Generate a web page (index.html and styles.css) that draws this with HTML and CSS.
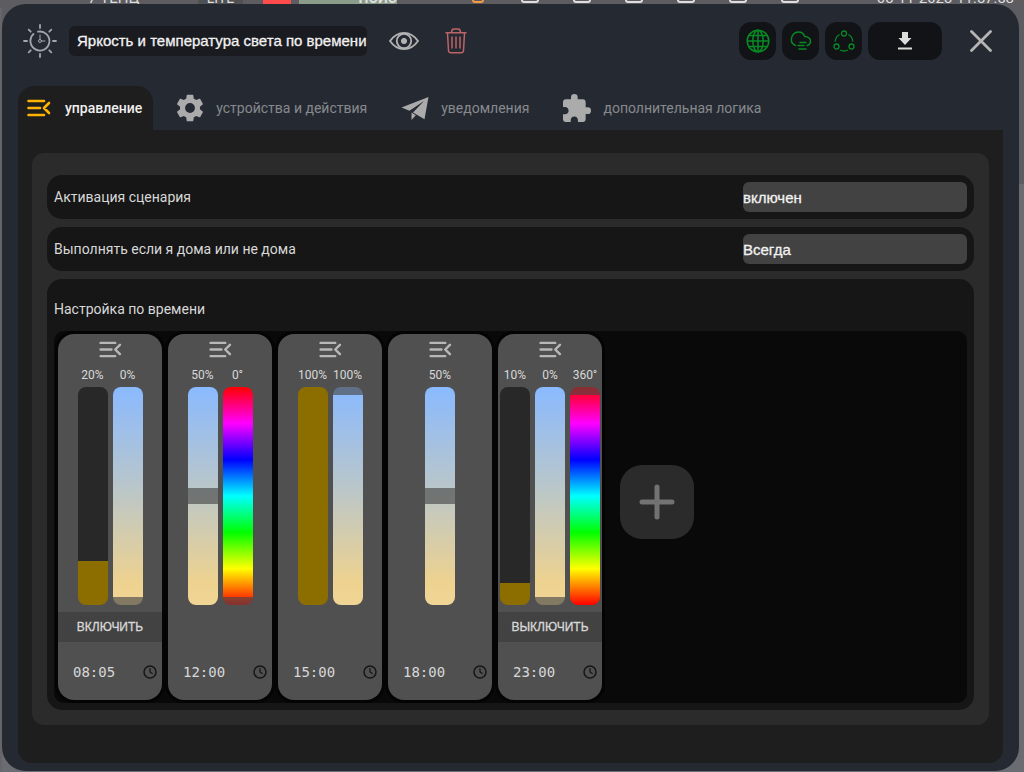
FILE: index.html
```html
<!DOCTYPE html>
<html lang="ru">
<head>
<meta charset="utf-8">
<title>Яркость и температура света по времени</title>
<link rel="stylesheet" href="styles.css">
</head>
<body>
<svg class="sprite" aria-hidden="true">
  <symbol id="menu-open" viewBox="0 0 24 18"><path d="M1.500 2h15.500M1.500 9h11.500M1.500 16h15.500M22 4l-5 5 5 5" fill="none" stroke="currentColor" stroke-width="2.600" stroke-linecap="round" stroke-linejoin="round"/></symbol>
  <symbol id="clock" viewBox="0 0 14 14"><circle cx="7" cy="7" r="6" fill="none" stroke="currentColor" stroke-width="1.500"/><path d="M7 3.300V7l2.600 1.700" fill="none" stroke="currentColor" stroke-width="1.300"/></symbol>
</svg>

<div class="backdrop" aria-hidden="true">
  <div class="topbar">
    <span class="brand">7·ТЕНЦ</span>
    <span class="chip">LITE</span>
    <span class="chip chip-red"></span>
    <span class="chip chip-green">ПОИС</span>
    <span class="mini mini-orange"></span><span class="mini"></span><span class="mini"></span><span class="mini"></span><span class="mini"></span><span class="mini"></span><span class="mini"></span>
    <span class="date">05-11-2023 11:57:58</span>
  </div>
</div>

<main class="dialog" role="dialog" aria-labelledby="title">
  <header class="head">
    <svg class="logo" viewBox="0 0 34 34" fill="none" stroke="#a3a6aa" stroke-linecap="round">
      <path d="M10.500 10A9.500 9.500 0 1 0 15 7.700M8 14.500l-.3 1" stroke-width="1.800"/>
      <path d="M17 1v3M17 30v3M1 17h3M30 17h3M5.700 5.700l2 2M26.300 26.300l2 2M28.300 5.700l-2 2M5.700 28.300l2-2" stroke-width="1.800"/>
      <path d="M17 11v4.500M18.600 17H22" stroke-width="1"/><circle cx="17" cy="17" r="1.500" stroke-width="1"/>
    </svg>
    <input class="title" id="title" type="text" value="Яркость и температура света по времени" aria-label="Название сценария">
    <button class="plain eye" aria-label="Показать">
      <svg width="30" height="20" viewBox="0 0 30 20" fill="none" stroke="#b3b3b3" stroke-width="1.800"><path d="M1 10C5 4.300 9.500 1.800 15 1.800S25 4.300 29 10C25 15.700 20.500 18.200 15 18.200S5 15.700 1 10z"/><circle cx="15" cy="10" r="7.200"/><circle cx="15" cy="10" r="2.600" fill="#b3b3b3" stroke-width="1"/></svg>
    </button>
    <button class="plain trash" aria-label="Удалить">
      <svg width="22" height="26" viewBox="0 0 22 26" fill="none" stroke="#bd6468" stroke-width="1.500"><path d="M.5 4.700h21M2.500 5l1 17.500q.2 2.300 2.500 2.300h10q2.300 0 2.500-2.300L19.500 5M6.500 4.500q0-3.500 2.500-3.500h4q2.500 0 2.500 3.500M7 8.500v12M11 8.500v12M15 8.500v12"/></svg>
    </button>
    <div class="tools">
      <button class="tool" aria-label="Интернет">
        <svg width="24" height="24" viewBox="0 0 24 24" fill="none" stroke="#078a24" stroke-width="1.500"><circle cx="12" cy="12" r="10.800"/><ellipse cx="12" cy="12" rx="5.200" ry="10.800"/><path d="M12 1v22M1 12h22M3 6.500h18M3 17.500h18"/></svg>
      </button>
      <button class="tool" aria-label="Облако">
        <svg width="22" height="20" viewBox="0 0 22 20" fill="none" stroke="#078a24" stroke-width="1.500" stroke-linecap="round"><path d="M5.500 14.500C3 13.500 1.200 11.500 1.400 8.500 1.500 4 4.700 1 8.500 1c3 0 5.300 1.700 6.200 4.500C18.500 5.500 20.700 8 20.500 10.500c-.2 2.300-1.300 3.600-3.500 4M10 11.500h6M8 14.500h6M9 18h7"/></svg>
      </button>
      <button class="tool" aria-label="Связи">
        <svg width="22" height="22" viewBox="0 0 22 22" fill="none" stroke="#078a24" stroke-width="1.300"><circle cx="11" cy="3.500" r="2.500"/><circle cx="3.500" cy="16.500" r="2.500"/><circle cx="18.500" cy="16.500" r="2.500"/><path d="M6.500 4.500Q2.500 7 2.200 11.500M15.500 4.500Q19.500 7 19.800 11.500M7 20q4 2 8 0"/></svg>
      </button>
      <button class="tool tool-wide" aria-label="Скачать">
        <svg width="14" height="18" viewBox="0 0 14 18" fill="#dcdcdc"><path d="M4 0h6v6h3.500L7 13 .5 6H4zM0 15.500h14V17.500H0z"/></svg>
      </button>
      <button class="plain close" aria-label="Закрыть">
        <svg width="22" height="22" viewBox="0 0 22 22" stroke="#b5b5b5" stroke-width="2.800" stroke-linecap="round"><path d="M1.500 1.500l19 19M20.500 1.500l-19 19"/></svg>
      </button>
    </div>
  </header>

  <nav class="tabs">
    <a class="tab active" href="#control"><svg class="tab-icon" viewBox="-2 -5 28 28"><use href="#menu-open" width="24" height="18"/></svg>управление</a>
    <a class="tab" href="#devices"><svg class="tab-icon" viewBox="1.500 1.500 21 21" fill="#ababab"><path d="M19.430 12.980c.04-.32.070-.64.070-.98s-.03-.66-.07-.98l2.110-1.650c.19-.15.240-.42.120-.64l-2-3.460c-.12-.22-.39-.3-.61-.22l-2.490 1c-.52-.4-1.080-.73-1.690-.98l-.38-2.650C14.460 2.180 14.250 2 14 2h-4c-.25 0-.46.180-.49.420l-.38 2.650c-.61.250-1.170.590-1.690.980l-2.490-1c-.23-.09-.49 0-.61.220l-2 3.460c-.13.220-.07.490.12.640l2.110 1.650c-.04.320-.07.650-.07.980s.03.660.07.980l-2.110 1.650c-.19.150-.24.420-.12.640l2 3.460c.12.220.39.300.61.220l2.490-1c.52.400 1.080.730 1.690.980l.38 2.650c.03.240.24.420.49.420h4c.25 0 .46-.18.490-.42l.38-2.650c.61-.25 1.170-.59 1.690-.98l2.490 1c.23.090.49 0 .61-.22l2-3.460c.12-.22.070-.49-.12-.64l-2.110-1.650zM12 15.700a3.700 3.700 0 1 1 0-7.400 3.700 3.700 0 0 1 0 7.400z"/></svg>устройства и действия</a>
    <a class="tab" href="#notices"><svg class="tab-icon" viewBox="0 0 28 28" fill="#ababab"><path d="M27.500 3L.5 13.500l8 3.300L23 7 12 18.500l11.500 6.800zM10.500 18.500v7.500l4.300-4.800z"/></svg>уведомления</a>
    <a class="tab" href="#logic"><svg class="tab-icon" viewBox="2 1 21 21" fill="#ababab"><path d="M20.500 11H19V7c0-1.100-.9-2-2-2h-4V3.500a2.500 2.500 0 0 0-5 0V5H4c-1.100 0-1.990.9-1.990 2v3.800H3.500c1.490 0 2.700 1.210 2.700 2.700s-1.210 2.700-2.700 2.700H2V20c0 1.100.9 2 2 2h3.800v-1.500c0-1.490 1.210-2.700 2.700-2.700 1.490 0 2.700 1.210 2.700 2.700V22H17c1.100 0 2-.9 2-2v-4h1.500a2.500 2.500 0 0 0 0-5z"/></svg>дополнительная логика</a>
  </nav>

  <section class="body" id="control">
    <div class="panel">
      <div class="row">
        <label for="activation">Активация сценария</label>
        <select id="activation"><option>включен</option><option>выключен</option></select>
      </div>
      <div class="row">
        <label for="presence">Выполнять если я дома или не дома</label>
        <select id="presence"><option>Всегда</option><option>Дома</option></select>
      </div>
      <div class="schedule">
        <h2>Настройка по времени</h2>
        <div class="board">
          <article class="card">
            <button class="card-menu" aria-label="Меню"><svg><use href="#menu-open"/></svg></button>
            <div class="bars">
              <label class="bar">20%<input class="level" type="range" value="20" style="--v:20%"></label>
              <label class="bar">0%<input class="warmth" type="range" value="0" style="--v:0%"></label>
            </div>
            <button class="action">ВКЛЮЧИТЬ</button>
            <label class="time"><input type="text" value="08:05" aria-label="Время"><svg><use href="#clock"/></svg></label>
          </article>
          <article class="card">
            <button class="card-menu" aria-label="Меню"><svg><use href="#menu-open"/></svg></button>
            <div class="bars">
              <label class="bar">50%<input class="warmth" type="range" value="50" style="--v:50%"></label>
              <label class="bar">0°<input class="hue" type="range" max="360" value="0" style="--v:0%"></label>
            </div>
            <label class="time"><input type="text" value="12:00" aria-label="Время"><svg><use href="#clock"/></svg></label>
          </article>
          <article class="card">
            <button class="card-menu" aria-label="Меню"><svg><use href="#menu-open"/></svg></button>
            <div class="bars">
              <label class="bar">100%<input class="level" type="range" value="100" style="--v:100%"></label>
              <label class="bar">100%<input class="warmth" type="range" value="100" style="--v:100%"></label>
            </div>
            <label class="time"><input type="text" value="15:00" aria-label="Время"><svg><use href="#clock"/></svg></label>
          </article>
          <article class="card">
            <button class="card-menu" aria-label="Меню"><svg><use href="#menu-open"/></svg></button>
            <div class="bars">
              <label class="bar">50%<input class="warmth" type="range" value="50" style="--v:50%"></label>
            </div>
            <label class="time"><input type="text" value="18:00" aria-label="Время"><svg><use href="#clock"/></svg></label>
          </article>
          <article class="card">
            <button class="card-menu" aria-label="Меню"><svg><use href="#menu-open"/></svg></button>
            <div class="bars">
              <label class="bar">10%<input class="level" type="range" value="10" style="--v:10%"></label>
              <label class="bar">0%<input class="warmth" type="range" value="0" style="--v:0%"></label>
              <label class="bar">360°<input class="hue" type="range" max="360" value="360" style="--v:100%"></label>
            </div>
            <button class="action">ВЫКЛЮЧИТЬ</button>
            <label class="time"><input type="text" value="23:00" aria-label="Время"><svg><use href="#clock"/></svg></label>
          </article>
          <button class="add" aria-label="Добавить"><svg width="36" height="36" viewBox="0 0 36 36" stroke="#727272" stroke-width="5" stroke-linecap="round"><path d="M18 3v30M3 18h30"/></svg></button>
        </div>
      </div>
    </div>
  </section>
</main>
</body>
</html>
```
FILE: styles.css
```css
* { box-sizing: border-box; }
body {
  margin: 0;
  min-height: 100vh;
  background: #5c5c61;
  color: #d8d8d8;
  font: 14px/20px Roboto, sans-serif;
}
button, input, select { margin: 0; padding: 0; border: 0; font: inherit; color: inherit; }
button { display: flex; align-items: center; justify-content: center; background: none; cursor: pointer; }
h2 { margin: 0; font-size: 14px; font-weight: 400; }
.sprite { display: none; }

/* page behind the dialog */
.backdrop {
  position: absolute;
  inset: 0;
  overflow: hidden;
  background: linear-gradient(90deg, #66666a 50%, transparent 50%), linear-gradient(#5c5c61 184px, #6b6b72 184px);
  background-size: 4px 100%, 100% 100%;
  background-repeat: no-repeat;
}
.topbar { display: flex; align-items: flex-start; gap: 14px; height: 20px; margin-top: -12px; padding: 0 10px 0 88px; background: #5c5c61; color: #dedede; font-size: 15px; white-space: nowrap; }
.chip { width: 45px; height: 20px; margin-left: 6px; background: #515154; text-align: center; font-size: 14px; }
.brand { width: 90px; }
.chip-red { width: 28px; background: #ff4b4b; }
.chip-green { width: 98px; margin: 0 61px 0 -6px; background: #8b9c8b; text-align: right; font-weight: 700; }
.mini { width: 18px; height: 15px; margin-right: 20px; border: 2px solid #dedede; border-radius: 3px; }
.mini-orange { width: 12px; margin-right: 23px; border-color: #f39a3e; }
.date { margin-left: auto; }

.dialog {
  position: relative;
  display: flex;
  flex-direction: column;
  min-height: calc(100vh - 5px);
  margin: 4px 5px 1px 2px;
  padding: 0 16px 8px;
  border-radius: 24px;
  background: #252932;
}
.head { display: flex; align-items: center; height: 73px; padding-left: 5px; }
.logo { width: 34px; height: 34px; flex: none; margin-right: 12px; }
.title {
  width: 298px;
  height: 30px;
  padding: 0 0 0 8px;
  border-radius: 6px;
  background: #1a1b20;
  color: #f2f2f2;
  font: 15px "Liberation Sans", sans-serif;
  -webkit-text-stroke: 0.3px;
}
.eye { margin-left: 22px; }
.trash { margin-left: 26px; }
.tools { display: flex; align-items: center; gap: 6px; margin-left: auto; }
.tool { width: 37px; height: 38px; border-radius: 12px; background: #121317; }
.tool-wide { width: 74px; }
.close { margin: 0 11px 0 22px; }

.tabs { display: flex; gap: 16px; margin-top: 9px; }
.tab {
  display: flex;
  align-items: center;
  gap: 12px;
  height: 44px;
  padding: 0 11px 0 7px;
  border-radius: 16px 16px 0 0;
  color: #87898d;
  text-decoration: none;
}
.tab.active { background: #1e1e1e; color: #f0f0f0; font-weight: 500; }
.tab.active .tab-icon { color: #ffb300; }
.tab-icon { width: 28px; height: 28px; }

.body { flex: 1; padding: 23px 14px 38px; border-radius: 0 0 14px 14px; background: #1e1e1e; }
.panel { display: flex; flex-direction: column; gap: 8px; padding: 22px 15px 15px; border-radius: 12px; background: #2b2b2b; }
.row { display: flex; align-items: center; justify-content: space-between; padding: 7px; border-radius: 15px; background: #161616; }
.row select {
  appearance: none;
  width: 224px;
  height: 30px;
  border-radius: 6px;
  background: #424242;
  color: #f2f2f2;
  font: 15px "Liberation Sans", sans-serif;
  -webkit-text-stroke: 0.3px;
}
.schedule { padding: 20px 7px 7px; border-radius: 15px; background: #161616; }
.board { display: flex; gap: 6px; margin-top: 12px; padding: 3px 4px; border-radius: 10px; background: #090909; }

.card { display: flex; flex-direction: column; width: 104px; height: 366px; overflow: hidden; border-radius: 16px; background: #505050; box-shadow: 0 0 0 3px #040404; }
.card-menu { height: 31px; color: #b8b8b8; }
.card-menu svg { width: 23px; height: 17px; }
.bars { display: flex; justify-content: center; gap: 5px; }
.bar { display: flex; flex-direction: column; align-items: center; gap: 2px; width: 30px; font-size: 12px; }
.bar input {
  appearance: none;
  writing-mode: vertical-lr;
  direction: rtl;
  width: 30px;
  height: 218px;
  border-radius: 8px;
  --band: linear-gradient(to top, transparent calc(var(--v) - 8px), #484848a6 calc(var(--v) - 8px), #484848a6 calc(var(--v) + 8px), transparent calc(var(--v) + 8px));
}
.bar input::-webkit-slider-thumb { appearance: none; width: 30px; height: 16px; background: transparent; }
.bar .level { background: linear-gradient(to top, #8c6d00 var(--v), #282828 var(--v)); }
.bar .warmth { background: var(--band), linear-gradient(#8abaff, #b8c6cb 45%, #eed28f 90%, #f0d596); }
.bar .hue { background: var(--band), linear-gradient(#f00, #f0f, #00f, #0ff, #0f0, #ff0, #f00); }
.action { height: 30px; margin-top: 7px; background: #424242; font: 12px "Liberation Sans", sans-serif; -webkit-text-stroke: 0.3px; }
.time { display: flex; align-items: center; justify-content: space-between; height: 58px; margin-top: auto; padding: 2px 5px 0 15px; }
.time input { width: 60px; background: none; font: 14px "DejaVu Sans Mono", monospace; }
.time svg { width: 14px; height: 14px; color: #161616; }

.add { align-self: center; width: 74px; height: 74px; margin: 0 0 30px 12px; border-radius: 22px; background: #2b2b2b; }
```
